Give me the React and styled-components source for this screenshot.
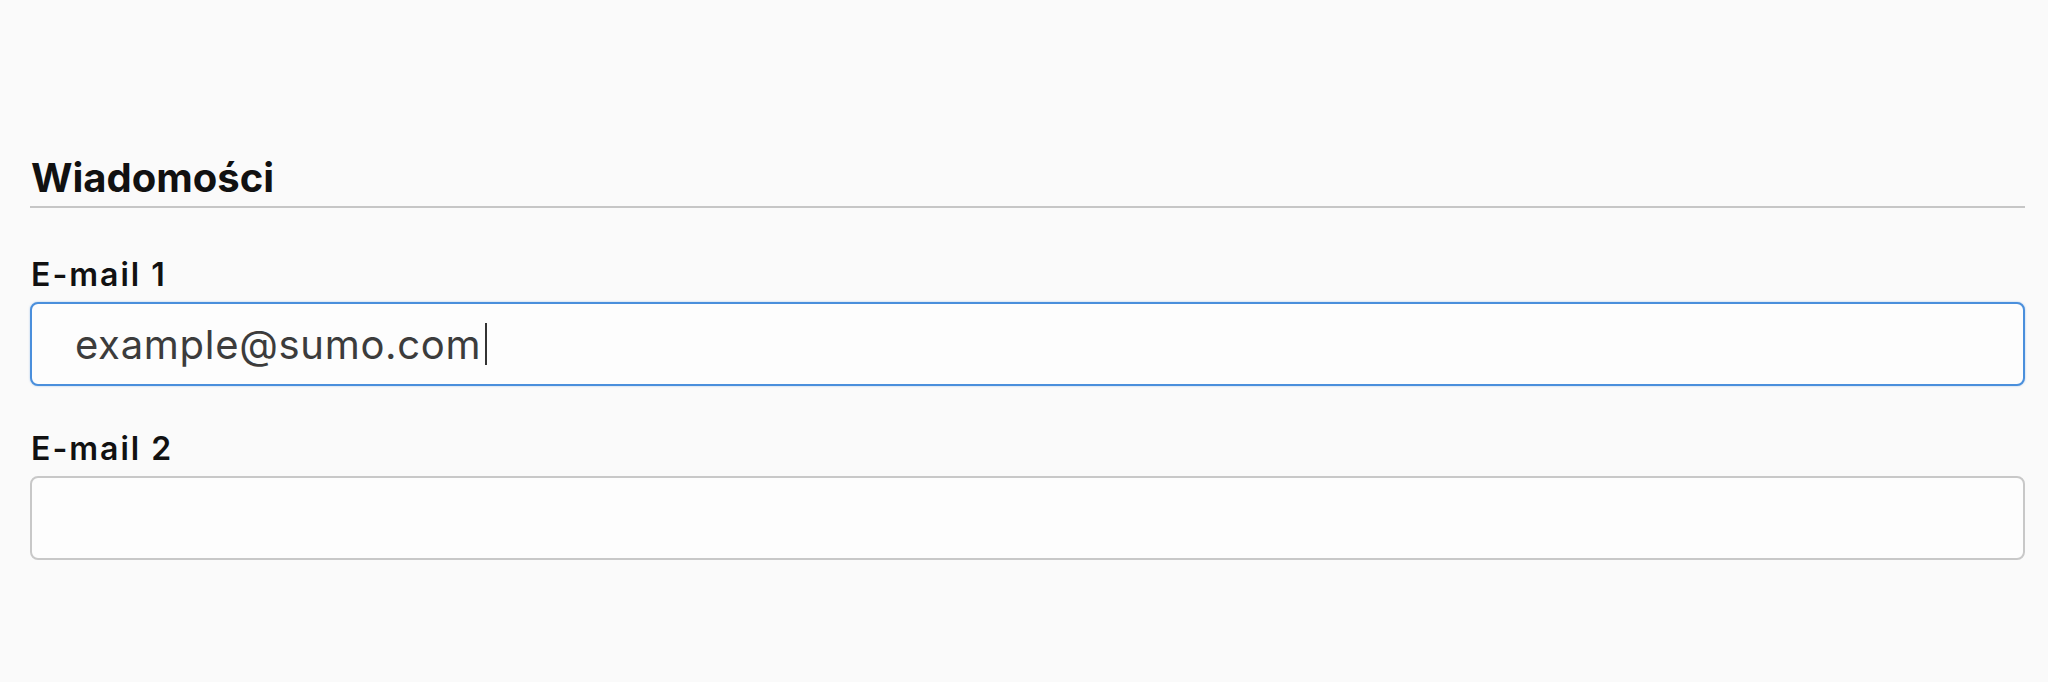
import styled, { createGlobalStyle } from 'styled-components'

const GlobalStyle = createGlobalStyle`
  html, body {
    margin: 0;
    padding: 0;
    background: #fafafa;
    font-family: Inter, "Noto Sans", "Liberation Sans", sans-serif;
  }
`

const Page = styled.div`
  padding: 154px 23px 0 30px;
  min-height: 100vh;
  box-sizing: border-box;
`

const Heading = styled.h2`
  margin: 0;
  padding-left: 1px;
  font-size: 40px;
  line-height: 48px;
  font-weight: 700;
  color: #111;
  padding-bottom: 4px;
  border-bottom: 2px solid #c6c6c6;
`

const Fields = styled.div`
  display: flex;
  flex-direction: column;
  gap: 44px;
  margin-top: 48px;
`

const Field = styled.div`
  display: flex;
  flex-direction: column;
  gap: 8px;
`

const Label = styled.label`
  padding-left: 1px;
  font-size: 32px;
  line-height: 38px;
  font-weight: 600;
  letter-spacing: 2px;
  color: #111;
`

const Box = styled.div`
  display: flex;
  align-items: center;
  height: 84px;
  box-sizing: border-box;
  padding: 0 43px;
  background: #fdfdfd;
  border: 2px solid ${(p) => (p.focused ? '#4a8fdc' : '#c8c8c8')};
  border-radius: 8px;
  box-shadow: ${(p) => (p.focused ? '0 0 2px rgba(74, 143, 220, 0.5)' : 'none')};
  font-size: 40px;
  letter-spacing: 0.7px;
  color: #3c3c3c;
`

const Caret = styled.span`
  display: inline-block;
  width: 2px;
  height: 42px;
  margin-left: 4px;
  background: #333;
`

const App = () => {
  return (
    <>
      <GlobalStyle />
      <Page>
        <Heading>Wiadomości</Heading>
        <Fields>
          <Field>
            <Label>E-mail 1</Label>
            <Box focused>
              example@sumo.com
              <Caret />
            </Box>
          </Field>
          <Field>
            <Label>E-mail 2</Label>
            <Box />
          </Field>
        </Fields>
      </Page>
    </>
  )
}

export default App
